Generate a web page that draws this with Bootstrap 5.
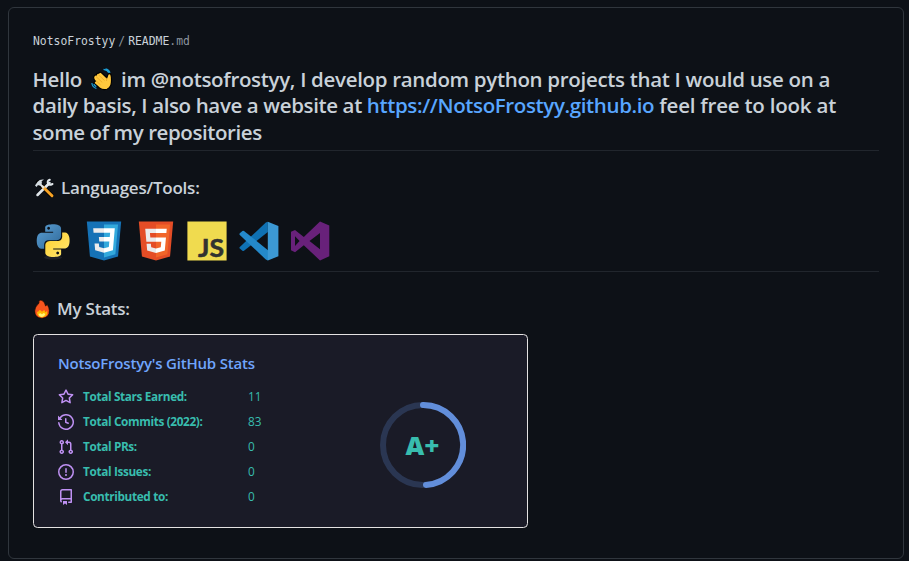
<!DOCTYPE html>
<html lang="en" data-bs-theme="dark">
<head>
<meta charset="utf-8">
<title>NotsoFrostyy/README.md</title>
<meta name="viewport" content="width=device-width, initial-scale=1">
<link rel="stylesheet" href="https://cdn.jsdelivr.net/npm/bootstrap@5.3.0/dist/css/bootstrap.min.css">
<style>
body{background:#0d1117;color:#c9d1d9;font-family:"Open Sans","Noto Sans",sans-serif;height:561px;overflow:hidden;padding:7px 5px 0 8px}
svg{display:block;flex:none}
.readme{height:552px;border:1px solid #30363d;border-radius:6px;padding:24px 24px 0}
.crumb{font:11.4px/18px "DejaVu Sans Mono","Liberation Mono",monospace}
.crumb .dim{color:#8b949e}
.crumb .sep{margin:0 3px}
.headline{color:#c9d1d9;font-size:20.5px;font-weight:600;line-height:26.4px;letter-spacing:-.32px;margin:16px 0 0;height:85px;border-bottom:1px solid #21262d;white-space:nowrap}
.headline>div{margin-left:-.5px}
.headline a{color:#58a6ff;text-decoration:none}
.headline .wave{margin:2px 8px 0 9px}
.line-b{letter-spacing:-.37px}
.line-b .tail{letter-spacing:-.22px}
.line-c{letter-spacing:-.42px}
.sub{color:#c9d1d9;font-size:17px;font-weight:600;line-height:22px;letter-spacing:-.22px;margin:26px 0 0}
.tools{height:73px;padding-top:22px;gap:11.4px;border-bottom:1px solid #21262d}
.stats{width:495px;height:194px;margin-top:14px;background:#1a1b27;border:1px solid #e4e2e2;border-radius:4.5px;padding:17px 24px}
.stats-title{color:#70a5fd;font-size:15px;font-weight:600;line-height:22px;letter-spacing:-.2px;margin:0 0 10.5px}
.stat{height:25px;color:#38bdae;font-size:11.8px}
.stat svg{fill:#bf91f3;margin-right:9px}
.stat .label{width:165px;font-weight:700;letter-spacing:-.36px}
.list-side{width:322px}
.ring{margin-top:27px}
</style>
</head>
<body>
<main class="readme">
  <div class="crumb"><span>NotsoFrostyy</span><span class="dim sep">/</span><span>README</span><span class="dim">.md</span></div>

  <h1 class="headline">
    <div class="d-flex"><span>Hello</span>
      <svg class="wave" width="22" height="23" viewBox="0 0 22 23">
        <path d="M3 8.300Q4 6.500 5.500 7 5.500 4.800 7.800 5.200 9 3.400 10.800 5L15.800 9.800 16.900 6.500Q18 4.800 19.800 6.200 20.800 9 20.400 14.500 20 19.500 16 21.200 12 22.500 8.500 20L3.600 15.700Q2.500 14 4.300 13.100 1.800 10.500 3 8.300z" fill="#ffc83d" stroke="#000" stroke-width="1.200" stroke-linejoin="round"/>
        <path d="M5 8.500l6.300 6M7.500 6.800l6 5.700M5 12.800l4.500 4M15.800 9.800l-.3 3.200" stroke="#e09a1c" stroke-width=".6" fill="none"/>
        <path d="M12.500 1.300q4 .4 5.300 3.500M14.500 .8q3.500 .8 4.500 4M.9 15q.2 4 4.500 5.500M2.800 16q.8 1.800 2.500 2.600" stroke="#1c9fd7" stroke-width="1.200" fill="none"/>
      </svg>
      <span>im @notsofrostyy, I develop random python projects that I would use on a</span></div>
    <div class="line-b">daily basis, I also have a website at <a href="#">https://NotsoFrostyy.github.io</a><span class="tail"> feel free to look at</span></div>
    <div class="line-c">some of my repositories</div>
  </h1>

  <h2 class="sub d-flex align-items-center">
    <svg width="28" height="20" viewBox="0 0 28 20">
      <g fill="none" stroke-linecap="round">
        <path d="M5 4.500L18.500 17.500" stroke="#000" stroke-width="4.500"/>
        <path d="M4.500 17L16.500 5" stroke="#dfe6ea" stroke-width="2.500"/>
        <path d="M16.800 1.700q-3 1-1.800 4 1 2 4.500.3" stroke="#dfe6ea" stroke-width="2"/>
        <path d="M10 9L19 17.800" stroke="#f7a325" stroke-width="3" />
        <path d="M6.500 5.500l4 4" stroke="#dfe6ea" stroke-width="2"/>
      </g>
      <path d="M2 7.500l2.600-3.800Q7 1 11 1.600L8.600 3.300 9 5.200 6.300 7.700 5 7 3.600 8.900z" fill="#d4dce1"/>
    </svg>
    <span>Languages/Tools:</span>
  </h2>

  <div class="tools d-flex">
    <svg width="40" height="40" viewBox="0 0 40 40">
      <defs>
        <linearGradient id="pyBlue" x1="0" y1="0" x2="1" y2="1"><stop stop-color="#5a9fd4"/><stop offset="1" stop-color="#306998"/></linearGradient>
        <linearGradient id="pyGold" x1="1" y1="1" x2="0.200" y2="0.200"><stop stop-color="#ffe873"/><stop offset="1" stop-color="#ffd43b"/></linearGradient>
      </defs>
      <ellipse cx="20" cy="36.500" rx="9" ry="2" fill="#fff" opacity=".07"/>
      <g transform="translate(3.800 3.300) scale(1.360)">
        <path fill="url(#pyBlue)" d="M14.25.18l.9.2.73.26.59.3.45.32.34.34.25.34.16.33.1.3.04.26.02.2-.01.13V8.5l-.05.63-.13.55-.21.46-.26.38-.3.31-.33.25-.35.19-.35.14-.33.1-.3.07-.26.04-.21.02H8.77l-.69.05-.59.14-.5.22-.41.27-.33.32-.27.35-.2.36-.15.37-.1.35-.07.32-.04.27-.02.21v3.06H3.17l-.21-.03-.28-.07-.32-.12-.35-.18-.36-.26-.36-.36-.35-.46-.32-.59-.28-.73-.21-.88-.14-1.05-.05-1.23.06-1.22.16-1.04.24-.87.32-.71.36-.57.4-.44.42-.33.42-.24.4-.16.36-.1.32-.05.24-.01h.16l.06.01h8.16v-.83H6.18l-.01-2.75-.02-.37.05-.34.11-.31.17-.28.25-.26.31-.23.38-.2.44-.18.51-.15.58-.12.64-.1.71-.06.77-.04.84-.02 1.27.05zm-6.3 1.98l-.23.33-.08.41.08.41.23.34.33.22.41.09.41-.09.33-.22.23-.34.08-.41-.08-.41-.23-.33-.33-.22-.41-.09-.41.09z"/>
        <path fill="url(#pyGold)" d="M21.1 6.11l.28.06.32.12.35.18.36.27.36.35.35.47.32.59.28.73.21.88.14 1.04.05 1.23-.06 1.23-.16 1.04-.24.86-.32.71-.36.57-.4.45-.42.33-.42.24-.4.16-.36.09-.32.05-.24.02-.16-.01h-8.22v.82h5.84l.01 2.76.02.36-.05.34-.11.31-.17.29-.25.25-.31.24-.38.2-.44.17-.51.15-.58.13-.64.09-.71.07-.77.04-.84.01-1.27-.04-1.07-.14-.9-.2-.73-.25-.59-.3-.45-.33-.34-.34-.25-.34-.16-.33-.1-.3-.04-.25-.02-.2.01-.13v-5.34l.05-.64.13-.54.21-.46.26-.38.3-.32.33-.24.35-.2.35-.14.33-.1.3-.06.26-.04.21-.02.13-.01h5.84l.69-.05.59-.14.5-.21.41-.28.33-.32.27-.35.2-.36.15-.36.1-.35.07-.32.04-.28.02-.21V6.07h2.09l.14.01zm-6.47 14.25l-.23.33-.08.41.08.41.23.33.33.23.41.08.41-.08.33-.23.23-.33.08-.41-.08-.41-.23-.33-.33-.23-.41-.08-.41.08z"/>
      </g>
    </svg>
    <svg width="40" height="40" viewBox="0 0 128 128">
      <path fill="#1572b6" d="M19.037 113.876L9.032 1.661h109.936l-10.016 112.198-45.019 12.480z"/>
      <path fill="#33a9dc" d="M64 116.800l36.378-10.086 8.559-95.878H64z"/>
      <path fill="#ebebeb" d="M64.048 23.435v13.831H30.640l-1.238-13.831zM64 51.395v13.831H48.792l-1.238-13.831zM64.083 87.349l-.061.018-15.403-4.159-.985-11.031H33.752l1.937 21.717 28.331 7.863.063-.018z"/>
      <path fill="#fff" d="M64 23.435h34.600l-5.900 68.120-.3 2.400L64 101.750V87.360l15.460-4.160 1.600-17.970H64V51.400h18.400l1.200-14.130H64z"/>
    </svg>
    <svg width="40" height="40" viewBox="0 0 128 128">
      <path fill="#e44d26" d="M19.037 113.876L9.032 1.661h109.936l-10.016 112.198-45.019 12.480z"/>
      <path fill="#f16529" d="M64 116.800l36.378-10.086 8.559-95.878H64z"/>
      <path fill="#ebebeb" d="M64 52.455H45.788L44.530 38.361H64V24.599H29.489l.33 3.692 3.382 37.927H64zm0 35.743l-.061.017-15.327-4.140-.979-10.975H33.816l1.928 21.609 28.193 7.826.063-.017z"/>
      <path fill="#fff" d="M63.952 52.455v13.763h16.947l-1.597 17.849-15.350 4.143v14.319l28.215-7.820.207-2.325 3.234-36.233.335-3.696h-3.708zm0-27.856v13.762h33.244l.276-3.092.628-6.978.329-3.692z"/>
    </svg>
    <svg width="40" height="40" viewBox="0 0 40 40">
      <path fill="#f0db4f" d="M.4.400h39.200v39.200H.4z"/>
      <text x="11" y="36" font-family="Lato" font-weight="700" font-size="24.500" textLength="26" lengthAdjust="spacingAndGlyphs" fill="#323330" stroke="#323330" stroke-width=".5">JS</text>
    </svg>
    <svg width="40" height="40" viewBox="0 0 40 40">
      <path fill="#0f71b3" d="M28.800 .800V11L5 29.800q-.8.500-1.600 0L.800 27.500q-.8-.8 0-1.600L26.800 1.600z"/>
      <path fill="#2489ca" d="M29 39.500V29.200L5 10q-.8-.500-1.600 0L.800 12.300q-.8.800 0 1.600L26.800 38.500z"/>
      <path fill="#3c99d4" d="M28.800 .800L39.400 5V35.200L28.800 39.500z"/>
    </svg>
    <svg width="40" height="40" viewBox="0 0 40 40">
      <path fill="#68217a" fill-rule="evenodd" d="M30 .600L39.300 4.600V35.200L30 39.400 13.800 24.300 5 31.300 1 29.300V10.800L5 9 13.800 15.900zM5 15.300v9.700l4.600-4.900zM30 12L19.500 20.100 30 28.200z"/>
    </svg>
  </div>

  <h2 class="sub d-flex align-items-center">
    <svg width="24" height="20" viewBox="0 0 24 20">
      <path d="M8 1q-3 0-2 3-4.300 4-4.300 8 0 7 7.200 7.200 7.700-.4 7.400-7.700-.2-3-2-6l-1.700 1.500Q11.800 2 8 1z" fill="#f8541d" stroke="#000" stroke-width=".6"/>
      <path d="M4 13q2-.3 2.500-2 1.500 0 2.500 1.800 1-1.800 2.600-1.600l.6 2 2-1.200q.8 5.800-5 6.400Q4 18 4 13z" fill="#ffb700"/>
      <path d="M5.500 15l2-.8 1.500 1 1.700-1.200 1.600 1q-.8 2.900-3.300 2.900-2.800 0-3.500-2.900z" fill="#fff478"/>
    </svg>
    <span>My Stats:</span>
  </h2>

  <section class="stats d-flex">
    <div class="list-side">
      <h3 class="stats-title">NotsoFrostyy's GitHub Stats</h3>
      <div class="stat d-flex align-items-center"><svg width="16" height="16" viewBox="0 0 16 16"><path fill-rule="evenodd" d="M8 .25a.75.75 0 01.673.418l1.882 3.815 4.210.612a.75.75 0 01.416 1.279l-3.046 2.970.719 4.192a.75.75 0 01-1.088.791L8 12.347l-3.766 1.980a.75.75 0 01-1.088-.79l.72-4.194L.818 6.374a.75.75 0 01.416-1.280l4.210-.611L7.327.668A.75.75 0 018 .25zm0 2.445L6.615 5.500a.75.75 0 01-.564.410l-3.097.450 2.240 2.184a.75.75 0 01.216.664l-.528 3.084 2.769-1.456a.75.75 0 01.698 0l2.770 1.456-.53-3.084a.75.75 0 01.216-.664l2.240-2.183-3.096-.45a.75.75 0 01-.564-.41L8 2.694v.001z"/></svg><span class="label">Total Stars Earned:</span><span>11</span></div>
      <div class="stat d-flex align-items-center"><svg width="16" height="16" viewBox="0 0 16 16"><path fill-rule="evenodd" d="M1.643 3.143L.427 1.927A.25.25 0 000 2.104V5.750c0 .138.112.25.25.25h3.646a.25.25 0 00.177-.427L2.715 4.215a6.500 6.500 0 11-1.180 4.458.75.75 0 10-1.493.154 8.001 8.001 0 101.600-5.684zM7.750 4a.75.75 0 01.75.75v2.992l2.028.812a.75.75 0 01-.557 1.392l-2.500-1A.75.75 0 017 8.250v-3.500A.75.75 0 017.750 4z"/></svg><span class="label">Total Commits (2022):</span><span>83</span></div>
      <div class="stat d-flex align-items-center"><svg width="16" height="16" viewBox="0 0 16 16"><path fill-rule="evenodd" d="M7.177 3.073L9.573.677A.25.25 0 0110 .854v4.792a.25.25 0 01-.427.177L7.177 3.427a.25.25 0 010-.354zM3.750 2.500a.75.75 0 100 1.500.75.75 0 000-1.500zm-2.250.75a2.250 2.250 0 113 2.122v5.256a2.251 2.251 0 11-1.500 0V5.372A2.250 2.250 0 011.500 3.250zM11 2.500h-1V4h1a1 1 0 011 1v5.628a2.251 2.251 0 101.500 0V5A2.500 2.500 0 0011 2.500zm1 10.250a.75.75 0 111.500 0 .75.75 0 01-1.500 0zM3.750 12a.75.75 0 100 1.500.75.75 0 000-1.500z"/></svg><span class="label">Total PRs:</span><span>0</span></div>
      <div class="stat d-flex align-items-center"><svg width="16" height="16" viewBox="0 0 16 16"><path fill-rule="evenodd" d="M8 1.500a6.500 6.500 0 100 13 6.500 6.500 0 000-13zM0 8a8 8 0 1116 0A8 8 0 010 8zm9 3a1 1 0 11-2 0 1 1 0 012 0zm-.25-6.250a.75.75 0 00-1.500 0v3.500a.75.75 0 001.500 0v-3.500z"/></svg><span class="label">Total Issues:</span><span>0</span></div>
      <div class="stat d-flex align-items-center"><svg width="16" height="16" viewBox="0 0 16 16"><path fill-rule="evenodd" d="M2 2.500A2.500 2.500 0 014.500 0h8.750a.75.75 0 01.75.75v12.500a.75.75 0 01-.75.75h-2.500a.75.75 0 110-1.500h1.750v-2h-8a1 1 0 00-.714 1.700.75.75 0 01-1.072 1.050A2.495 2.495 0 012 11.500v-9zm10.500-1V9h-8c-.356 0-.694.074-1 .208V2.500a1 1 0 011-1h8zM5 12.250v3.250a.25.25 0 00.4.2l1.450-1.087a.25.25 0 01.3 0L8.600 15.700a.25.25 0 00.4-.2v-3.250a.25.25 0 00-.25-.25h-3.500a.25.25 0 00-.25.25z"/></svg><span class="label">Contributed to:</span><span>0</span></div>
    </div>
    <svg class="ring align-self-center" width="86" height="86" viewBox="0 0 86 86">
      <circle cx="43" cy="43" r="40" fill="none" stroke="#70a5fd" stroke-width="6" opacity=".2"/>
      <path d="M43 3A40 40 0 0 1 46 82.900" fill="none" stroke="#70a5fd" stroke-width="6" stroke-linecap="round" opacity=".8"/>
      <text x="25.500" y="53" textLength="34" lengthAdjust="spacingAndGlyphs" font-family="Open Sans" font-weight="800" font-size="24" fill="#38bdae">A+</text>
    </svg>
  </section>
</main>
<script src="https://cdn.jsdelivr.net/npm/bootstrap@5.3.0/dist/js/bootstrap.bundle.min.js"></script>
</body>
</html>
